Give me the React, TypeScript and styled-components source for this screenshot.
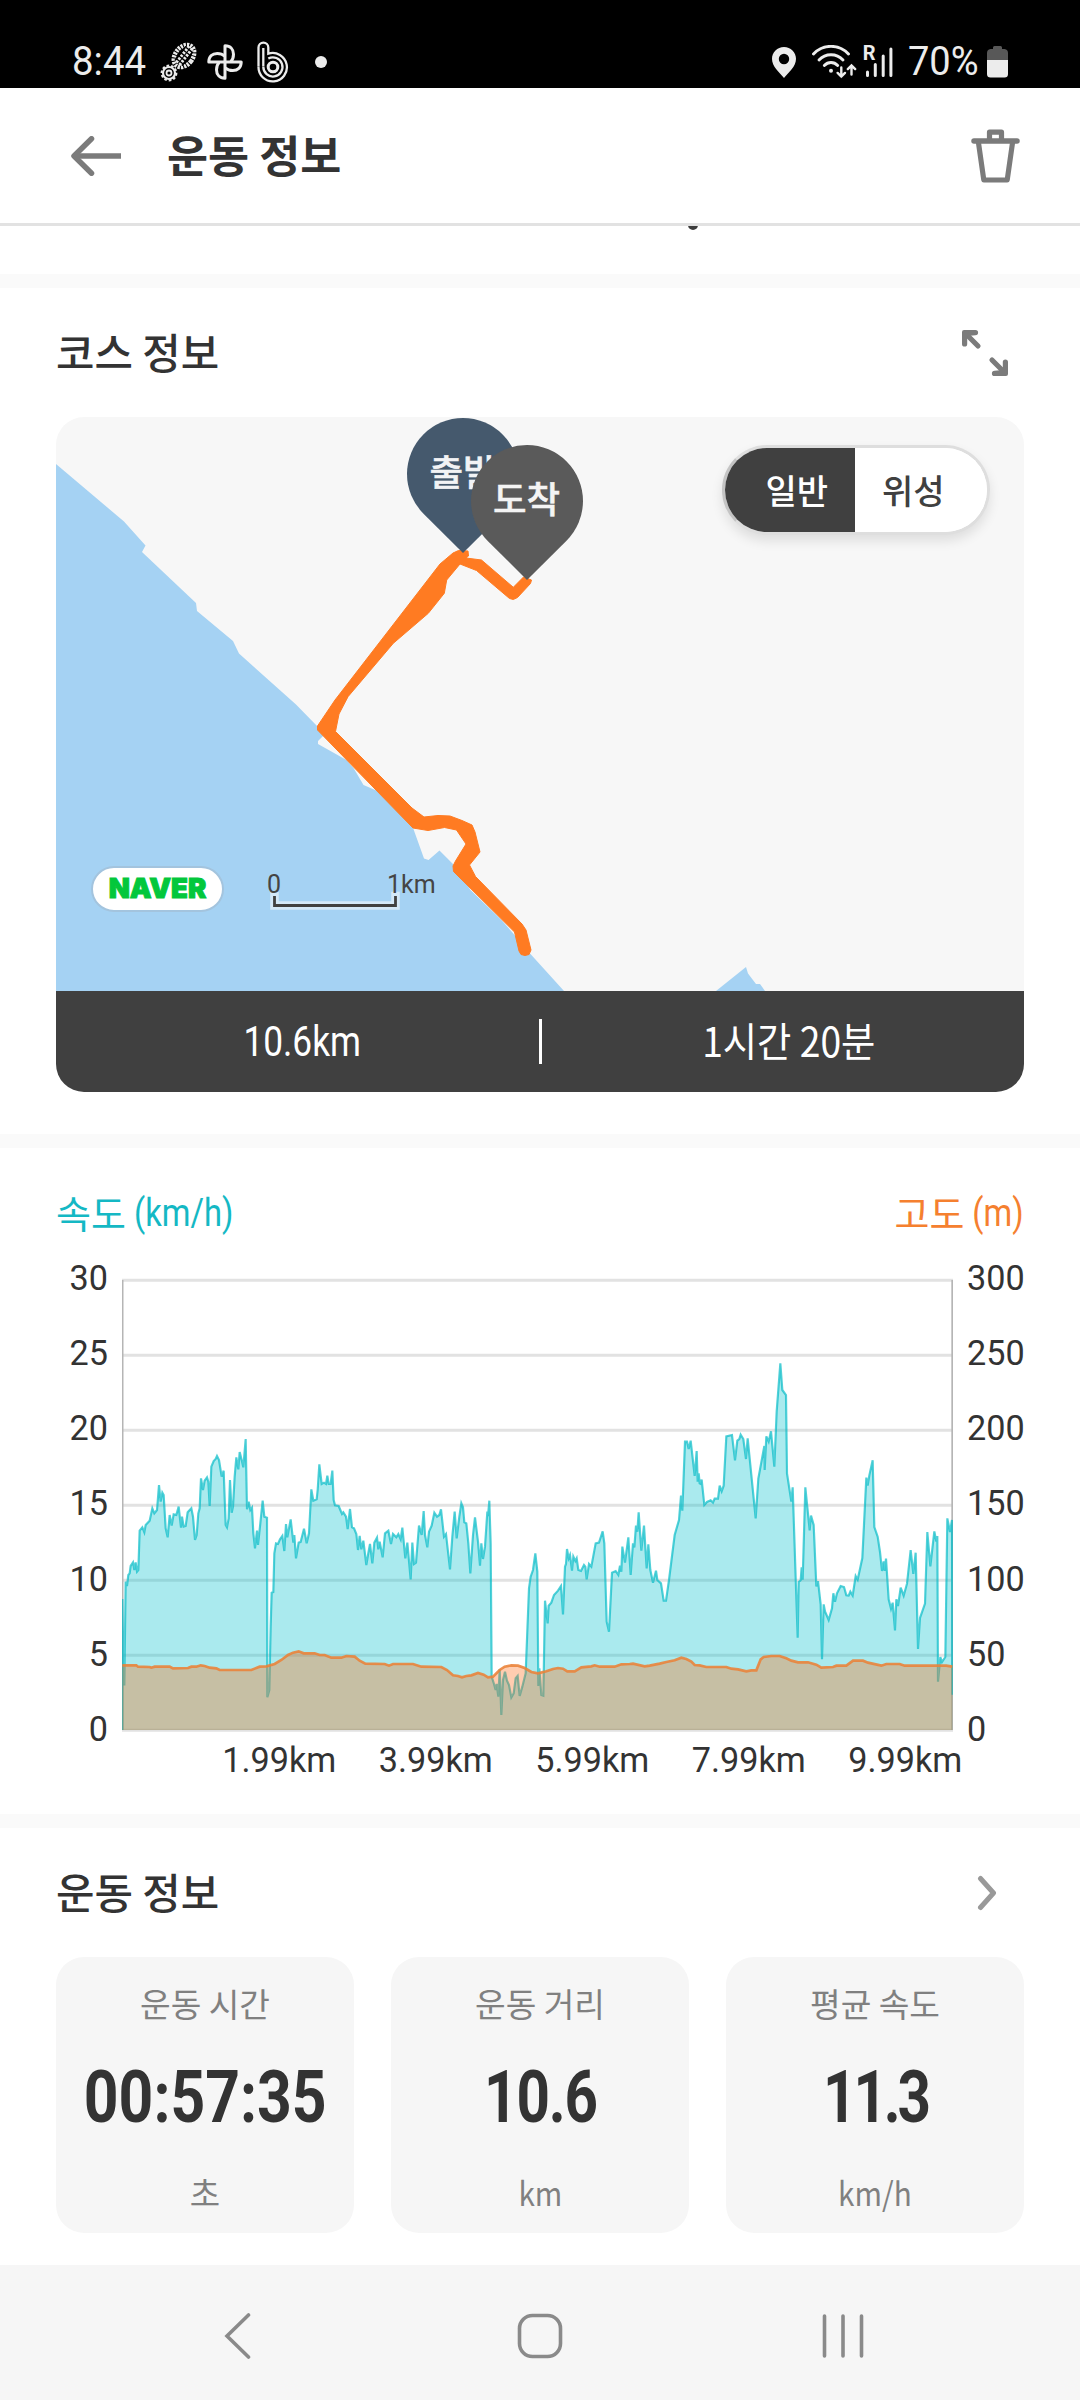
import React from "react";
import styled, { createGlobalStyle } from "styled-components";

const GlobalStyle = createGlobalStyle`
  * { box-sizing: border-box; }
  body { margin: 0; background: #fff; }
`;

const KR = '"Noto Sans CJK KR", sans-serif';
const ROBOTO = 'Roboto, "Noto Sans CJK KR", sans-serif';

const Screen = styled.div`
  width: 1080px;
  height: 2400px;
  display: flex;
  flex-direction: column;
  background: #fff;
  color: #333;
  font-family: ${KR};
  overflow: hidden;
`;

const Text = styled.span<{
  $size: number;
  $weight?: number;
  $color?: string;
  $stretch?: number;
  $origin?: string;
  $font?: string;
  $shift?: number;
  $tracking?: number;
  $outline?: string;
}>`
  display: block;
  white-space: nowrap;
  line-height: 1;
  font-family: ${(p) => p.$font ?? KR};
  font-size: ${(p) => p.$size}px;
  font-weight: ${(p) => p.$weight ?? 400};
  letter-spacing: ${(p) => p.$tracking ?? 0}px;
  color: ${(p) => p.$color ?? "#333"};
  -webkit-text-stroke: ${(p) => p.$outline ?? "0"};
  transform: translateY(${(p) => p.$shift ?? 0}px) scaleX(${(p) => p.$stretch ?? 1});
  transform-origin: ${(p) => p.$origin ?? "center"} center;
`;

/* ---------- status bar ---------- */

const StatusBar = styled.div`
  height: 88px;
  flex: none;
  display: flex;
  justify-content: space-between;
  align-items: flex-start;
  padding: 42px 72px 0 72px;
  background: #000;
`;

const StatusGroup = styled.div`
  display: flex;
  align-items: center;
  height: 40px;
`;

const Gap = styled.i<{ $w: number }>`
  width: ${(p) => p.$w}px;
`;

const FG = "#ececec";

const ShoeIcon = () => (
  <svg width="38" height="40" viewBox="0 0 38 40" fill="none" stroke={FG}>
    <g transform="rotate(38 24 14)">
      <ellipse cx="24" cy="14" rx="8.800" ry="12.300" strokeWidth="4.400" strokeDasharray="2.200 1" />
      <path d="M24 3v22" strokeWidth="7" strokeDasharray="2.300 1.400" />
      <path d="M19.500 5v18M28.500 5v18" stroke="#000" strokeWidth="1.300" />
      <path d="M24 4v20" stroke="#000" strokeWidth="1" />
    </g>
    <circle cx="9" cy="31" r="6" strokeWidth="2.200" />
    <circle cx="9" cy="31" r="7.400" strokeWidth="2" strokeDasharray="2.600 2" />
    <circle cx="9" cy="31" r="2.500" strokeWidth="1.800" />
  </svg>
);

const PinwheelIcon = () => (
  <svg width="36" height="38" viewBox="0 0 36 38" fill="none" stroke={FG} strokeWidth="3" strokeLinejoin="round">
    {[0, 90, 180, 270].map((a) => (
      <path key={a} transform={`rotate(${a} 18 19)`} d="M18 19V2.800c5.500 0 8.500 3.600 8.500 8.400 0 3.300-.9 5.600-2.700 7.600" />
    ))}
  </svg>
);

const BandIcon = () => (
  <svg width="32" height="42" viewBox="0 0 32 42" fill="none" stroke={FG} strokeWidth="2.300">
    <path d="M1.500 25.500V6.500a4.900 4.900 0 0 1 9.800 0v6.200A14.200 14.200 0 1 1 1.500 25.800" />
    <path d="M6.300 25.500V7" />
    <path d="M11.300 17.500a9.600 9.600 0 1 1-5 8.300" />
    <circle cx="16" cy="26" r="4.800" strokeWidth="3" />
  </svg>
);

const DotIcon = () => (
  <svg width="12" height="12" viewBox="0 0 12 12">
    <circle cx="6" cy="6" r="6" fill={FG} />
  </svg>
);

const LocationIcon = () => (
  <svg width="24" height="31" viewBox="0 0 24 31">
    <path
      fill={FG}
      fillRule="evenodd"
      d="M12 0C5.300 0 0 5.200 0 11.800 0 19.500 7 25 12 31c5-6 12-11.500 12-19.200C24 5.200 18.700 0 12 0zm0 6.800a5.200 5.200 0 1 1 0 10.400a5.200 5.200 0 0 1 0-10.400z"
    />
  </svg>
);

const WifiIcon = () => (
  <svg width="45" height="34" viewBox="0 0 45 34" fill="none" stroke={FG} strokeWidth="2.900" strokeLinecap="round">
    <path d="M1.500 9C11-1.200 27-1.200 36.500 9" />
    <path d="M7 15c6.500-7 17.500-7 24 0" />
    <path d="M12.300 20.500c3.800-4 9.600-4 13.400 0" />
    <circle cx="19" cy="25.800" r="2" fill={FG} stroke="none" />
    <path d="M29.300 22.500v9m-3.700-3.600 3.700 3.700 3.700-3.700M39.500 29.500v-9m-3.700 3.600 3.700-3.700 3.700 3.700" strokeWidth="2.400" />
  </svg>
);

const Signal = styled.div`
  position: relative;
  width: 30px;
  height: 32px;
`;

const Roaming = styled.span`
  position: absolute;
  left: 0;
  top: 0;
  font: 700 20px/15px Roboto, sans-serif;
  color: ${FG};
`;

const SignalBars = () => (
  <svg width="30" height="32" viewBox="0 0 30 32" stroke={FG} strokeWidth="3" strokeLinecap="round">
    <path d="M4.500 26v3.500M12.300 18.500v11M20.200 10v19.500M27.900 3v26.500" />
  </svg>
);

const BatteryIcon = () => (
  <svg width="21" height="32" viewBox="0 0 21 32">
    <path d="M6 1.500Q6 0 7.500 0h6Q15 0 15 1.500V3h2.500Q21 3.500 21 7v7H0V7q0-3.500 3.500-4H6z" fill="#585858" />
    <path d="M0 14h21v14q0 3.500-3.500 3.500h-14Q0 31.500 0 28z" fill={FG} />
  </svg>
);

/* ---------- app header ---------- */

const Header = styled.header`
  height: 138px;
  flex: none;
  display: flex;
  align-items: center;
  padding: 0 60px 0 70px;
  border-bottom: 3px solid #e2e2e2;
`;

const HeaderTitle = styled.h1`
  flex: 1;
  margin: 0 0 0 46px;
`;

const BackArrow = () => (
  <svg width="51" height="40" viewBox="0 0 51 40" fill="none" stroke="#7b7b7b" strokeWidth="5.500">
    <path d="M51 20H5" />
    <path d="M21.500 2.800 4 20l17.500 17.200" strokeLinecap="round" strokeLinejoin="round" />
  </svg>
);

const TrashIcon = () => (
  <svg width="49" height="54" viewBox="0 0 49 54" fill="none" stroke="#7b7b7b" strokeWidth="5.200" strokeLinejoin="round">
    <path d="M3 12h43" strokeLinecap="round" strokeWidth="5.500" />
    <path d="M18.500 12V3.200h12V12" />
    <path d="M7.300 12.500 12.800 51h23.400l5.500-38.500" />
  </svg>
);

const ScrolledTail = styled.div`
  height: 48px;
  flex: none;
  overflow: hidden;
  padding-left: 688px;
`;

const TailDot = styled.div`
  width: 10px;
  height: 10px;
  margin-top: -6px;
  border-radius: 50%;
  background: #3c3c3c;
`;

const Band = styled.div`
  height: 14px;
  flex: none;
  background: #fafafa;
`;

/* ---------- course section ---------- */

const Section = styled.section<{ $h: number }>`
  height: ${(p) => p.$h}px;
  flex: none;
  padding: 0 56px;
`;

const SectionHead = styled.div<{ $h: number; $right: number }>`
  height: ${(p) => p.$h}px;
  display: flex;
  align-items: center;
  justify-content: space-between;
  padding-right: ${(p) => p.$right}px;
`;

const ExpandIcon = () => (
  <svg width="46" height="46" viewBox="0 0 46 46" fill="none" stroke="#7b7b7b" strokeWidth="5.200" strokeLinecap="round">
    <path d="M16 16 4 4" />
    <path d="M0 2Q0 0 2 0h11.500a2.600 2.600 0 0 1 0 5.200L5.200 6v8a2.600 2.600 0 0 1-5.200 0z" fill="#7b7b7b" stroke="none" />
    <path d="M30 30l12 12" />
    <path d="M46 44q0 2-2 2H32.500a2.600 2.600 0 0 1 0-5.200l8.300-.8v-8a2.600 2.600 0 0 1 5.200 0z" fill="#7b7b7b" stroke="none" />
  </svg>
);

const CourseCard = styled.div`
  border-radius: 28px;
  overflow: hidden;
`;

const MapCanvas = styled.div`
  position: relative;
  height: 574px;
  background: #f7f7f7;
`;

const MapShapes = styled.svg`
  display: block;
`;

const Pin = styled.div<{ $x: number; $y: number }>`
  position: absolute;
  left: ${(p) => p.$x - 56}px;
  top: ${(p) => p.$y - 135}px;
  width: 112px;
  height: 135px;
  display: grid;
  justify-items: center;

  > * { grid-area: 1 / 1; }
  > span { margin-top: 35px; }
`;

const PinShape = ({ color }: { color: string }) => (
  <svg width="112" height="135" viewBox="0 0 112 135">
    <path d="M56 135 16.500 95.700A56 56 0 1 1 95.500 95.700z" fill={color} />
  </svg>
);

const Toggle = styled.div`
  position: absolute;
  right: 34px;
  top: 28px;
  width: 268px;
  height: 90px;
  display: flex;
  border: 3px solid #dedede;
  border-left-color: #c4c4c4;
  border-radius: 45px;
  overflow: hidden;
  background: #fff;
  box-shadow: 0 6px 12px rgba(0, 0, 0, 0.1);
`;

const ToggleOption = styled.button<{ $on?: boolean }>`
  flex: ${(p) => (p.$on ? "0 0 130px" : "1")};
  display: flex;
  align-items: center;
  justify-content: ${(p) => (p.$on ? "flex-end" : "flex-start")};
  padding: ${(p) => (p.$on ? "0 27px 0 0" : "0 0 0 27px")};
  border: 0;
  background: ${(p) => (p.$on ? "#404040" : "#fff")};
`;

const NaverBadge = styled.div`
  position: absolute;
  left: 35px;
  top: 449px;
  width: 133px;
  height: 46px;
  display: flex;
  align-items: center;
  justify-content: center;
  border: 2px solid #a3c4de;
  border-radius: 23px;
  background: #fff;
`;

const ScaleLabel = styled.div<{ $x: number }>`
  position: absolute;
  left: ${(p) => p.$x}px;
  top: 454.5px;
`;

const CourseBar = styled.div`
  height: 101px;
  display: flex;
  align-items: center;
  background: #404040;

  > span { flex: 1; text-align: center; padding-left: 12px; }
`;

const BarRule = styled.i`
  width: 3px;
  height: 45px;
  background: #fff;
`;

const WATER =
  "56,464 124,521.5 145.5,545.5 142,552 196,603 197,611 233,641 239,653.5 296,704.5 318,727 324,735 318,741 318,744 346.5,760 353.5,768 363.5,785 377.5,791 412,825 424,858.5 428.500,860 439.500,850.5 453,864 470.5,890 501.5,920 514.5,935 526,950 530.5,954 564,991 56,991";

const INLET = "716,991 746,967 748,973.5 756,984 760,984 765,991";

const ROUTE_UPPER =
  "335,700 440,564 453,553 458.5,550.5 468,551 468.5,556 466,558 481.500,560 513.3,587.3 523.5,577 531.5,580 530.5,583.5 517.5,597.5 513.3,599.5 509.5,598.5 476.5,570.5 460,564 446.7,580 444.3,593.3 428.3,613.3 393.3,643.3 348,696.7";

const ROUTE_LOWER =
  "348,696.7 339,714 335.5,731.500 412,808 424,817 438,815.5 450,816 462,820.5 472,825 475,832 480,852 469.5,865 475.5,876.5 522,924 526,930 531,950 529,954.5 525,955.5 521,954.500 519,951 514.5,932 453.5,871.5 453,866 455.5,861 466,844 456.5,830 444.5,827.5 428,830.5 413,828 317.5,730 317.5,726 335,700";

const CourseMap = () => (
  <MapCanvas>
    <MapShapes width="968" height="574" viewBox="56 417 968 574">
      <polygon points={WATER} fill="#a5d2f3" />
      <polygon points={INLET} fill="#a5d2f3" />
      <g fill="#ff7b22" stroke="#ff7b22" strokeWidth="1" strokeLinejoin="round">
        <polygon points={ROUTE_UPPER} />
        <polygon points={ROUTE_LOWER} />
      </g>
      <path d="M274.500 896v9.500h121v-9.500" fill="none" stroke="#d3e8f8" strokeWidth="8.500" strokeLinecap="square" />
      <path d="M274.500 896v9.500h121v-9.500" fill="none" stroke="#404040" strokeWidth="2.800" />
    </MapShapes>
    <Pin $x={407} $y={136}>
      <PinShape color="#45596d" />
      <Text $size={36.5} $weight={500} $color="#f2f3f5" $outline="0.5px #f2f3f5">출발</Text>
    </Pin>
    <Pin $x={470.5} $y={163}>
      <PinShape color="#5a5a5a" />
      <Text $size={36.5} $weight={500} $color="#f4f4f4" $outline="0.5px #f4f4f4">도착</Text>
    </Pin>
    <Toggle>
      <ToggleOption $on>
        <Text $size={34} $weight={500} $color="#fff">일반</Text>
      </ToggleOption>
      <ToggleOption>
        <Text $size={34} $weight={500} $color="#404040">위성</Text>
      </ToggleOption>
    </Toggle>
    <NaverBadge>
      <Text $size={27.5} $weight={900} $color="#03c73c" $font="Inter, sans-serif" $outline="1px #03c73c">NAVER</Text>
    </NaverBadge>
    <ScaleLabel $x={211}>
      <Text $size={25} $font={ROBOTO} $color="#444">0</Text>
    </ScaleLabel>
    <ScaleLabel $x={331}>
      <Text $size={25} $font={ROBOTO} $color="#444">1km</Text>
    </ScaleLabel>
  </MapCanvas>
);

/* ---------- speed / altitude chart ---------- */

const Legend = styled.div`
  height: 130px;
  display: flex;
  align-items: center;
  justify-content: space-between;
`;

const LegendItem = styled.div<{ $gap: number }>`
  display: flex;
  align-items: center;
  gap: ${(p) => p.$gap}px;
`;

const ChartGrid = styled.div`
  display: grid;
  grid-template-columns: 52px 831px 1fr;
  column-gap: 14px;
  align-items: start;
`;

const AxisColumn = styled.div<{ $align: string }>`
  height: 485px;
  margin-top: -17px;
  display: flex;
  flex-direction: column;
  justify-content: space-between;
  align-items: ${(p) => p.$align};
`;

const DistanceRow = styled.div`
  display: grid;
  grid-template-columns: repeat(5, 156.5px);
  justify-items: center;
  margin-left: 145px;
  margin-top: -3px;
`;

/* Samples are in thirds of a pixel, x from the left axis, y from the top of the plot. */
const SPEED =
  "68,1410 68,1017 72,1273 74,1273 78,965 82,978 86,945 90,940 93,918 100,907 104,930 108,907 112,935 116,930 120,812 128,802 134,817 138,795 150,782 158,745 164,760 172,750 178,675 183,725 188,698 192,705 198,805 204,832 210,765 216,797 222,763 230,765 237,740 244,803 247,770 252,800 258,798 264,757 275,745 280,770 286,840 291,825 296,760 300,745 304,655 310,690 315,662 322,652 326,665 330,738 335,620 342,603 348,597 352,588 358,600 366,650 372,632 378,795 382,802 387,775 391,660 396,758 400,740 405,650 410,592 416,628 420,576 426,600 431,622 438,537 442,748 447,725 452,750 457,743 461,820 466,865 472,812 475,855 482,790 489,722 494,770 502,773 503,1312 509,1290 513,1100 516,998 521,996 524,880 529,850 535,852 541,838 548,828 554,873 559,792 563,832 573,778 581,848 584,825 589,895 597,848 603,846 613,806 621,850 628,820 635,688 641,722 651,718 654,690 659,613 666,672 673,668 679,672 683,647 687,672 693,672 698,632 702,720 706,736 717,738 722,750 727,762 731,757 739,770 744,807 751,747 757,802 763,805 770,822 775,870 780,828 785,868 791,842 800,915 805,885 811,852 818,910 824,848 832,833 836,868 840,845 849,892 856,820 866,812 874,852 880,822 890,832 896,822 " +
  "903,838 908,803 917,895 923,848 933,958 938,848 943,912 949,908 958,797 966,825 972,753 976,825 983,862 988,815 996,797 1004,758 1012,770 1019,765 1024,748 1033,830 1039,822 1051,928 1058,830 1065,755 1071,835 1079,770 1085,730 1090,742 1094,787 1100,790 1106,850 1112,940 1120,825 1126,772 1135,845 1141,917 1145,850 1150,897 1156,860 1163,755 1165,768 1169,722 1173,850 1176,1250 1183,1272 1188,1290 1191,1272 1196,1310 1200,1228 1205,1365 1210,1260 1216,1235 1222,1262 1228,1275 1235,1312 1242,1300 1248,1255 1254,1248 1260,1308 1268,1280 1278,1240 1288,985 1293,950 1300,930 1307,880 1313,935 1316,1278 1319,1225 1325,1305 1331,1307 1336,1022 1344,1090 1347,1037 1355,1028 1363,1005 1375,992 1384,978 1390,1063 1396,920 1399,912 1402,867 1407,895 1411,885 1417,932 1421,890 1427,903 1431,895 1436,930 1444,933 1453,915 1457,920 1461,958 1468,912 1475,920 1488,850 1498,848 1509,814 1514,850 1521,1085 1528,1115 1537,938 1548,933 1556,945 1561,917 1565,935 1568,860 1576,908 1586,832 1593,945 1600,850 1604,862 1609,797 1613,815 1617,757 1625,872 1633,797 1641,925 1646,853 1652,930 1660,968 1669,932 1673,960 1684,970 1692,1022 1699,1022 1708,960 1725,825 1738,780 1744,707 1748,752 1756,545 1762,545 1767,567 1773,542 1785,648 1791,573 1794,665 1797,640 1800,670 " +
  "1802,671 1806,659 1814,735 1822,726 1833,721 1840,728 1845,716 1855,716 1860,677 1866,694 1872,677 1880,529 1897,525 1906,601 1913,542 1919,537 1923,524 1931,537 1939,597 1944,535 1968,775 1976,656 1994,558 1995,630 2000,529 2007,545 2014,514 2024,620 2031,455 2042,310 2048,390 2059,405 2062,640 2075,725 2079,682 2094,1133 2097,966 2103,961 2106,922 2109,959 2117,682 2130,811 2134,767 2142,795 2150,979 2155,963 2163,1033 2167,1198 2172,1033 2176,1054 2187,1080 2197,1045 2201,1000 2206,1025 2212,1000 2223,978 2233,981 2240,1006 2247,1007 2252,995 2259,1007 2268,948 2274,959 2288,894 2300,653 2304,677 2309,646 2319,601 2324,801 2334,830 2341,876 2347,933 2352,904 2355,933 2359,896 2367,1018 2374,1046 2379,1028 2386,1111 2390,1018 2395,1038 2403,983 2412,1007 2422,971 2433,870 2441,942 2448,878 2455,1167 2461,1074 2476,1031 2483,816 2492,919 2504,814 2510,845 2513,828 2515,1265 2522,1191 2527,1206 2537,1191 2543,775 2551,816 2557,780 2558,1304";

const ALTITUDE =
  "68,1216 110,1216 115,1220 150,1221 155,1223 165,1220 210,1220 220,1225 265,1224 275,1220 290,1220 303,1216 315,1218 330,1223 350,1225 360,1230 455,1230 480,1220 500,1219 525,1212 545,1200 565,1185 580,1178 597,1174 612,1180 645,1180 660,1185 675,1185 695,1193 725,1193 740,1188 765,1190 780,1202 797,1211 855,1212 868,1217 880,1212 940,1212 965,1220 1025,1221 1042,1230 1060,1246 1075,1248 1087,1252 1100,1248 1115,1246 1135,1239 1152,1244 1165,1252 1180,1250 1200,1230 1215,1220 1235,1216 1255,1217 1275,1224 1295,1236 1315,1240 1340,1234 1360,1227 1375,1224 1390,1226 1403,1234 1425,1234 1445,1222 1475,1219 1485,1216 1500,1220 1545,1220 1565,1213 1590,1212 1600,1211 1635,1219 1650,1217 1680,1211 1700,1206 1725,1201 1745,1193 1760,1197 1775,1205 1785,1215 1800,1216 1820,1221 1880,1221 1895,1226 1915,1228 1940,1234 1955,1231 1970,1231 1983,1198 1992,1191 2015,1188 2040,1188 2060,1195 2075,1202 2095,1207 2125,1207 2150,1214 2165,1223 2200,1221 2210,1217 2240,1217 2260,1202 2290,1202 2305,1208 2345,1217 2360,1212 2400,1212 2415,1217 2540,1217 2558,1220";

const GRID_LINES = [0, 1, 2, 3, 4, 5, 6].map((i) => 60 + i * 225);

const PlotArea = styled.svg`
  display: block;
`;

const Plot = () => (
  <PlotArea width="831" height="454" viewBox="67 54 2493 1362">
    {GRID_LINES.map((y) => (
      <path key={y} d={`M66 ${y + 1}H2560`} stroke="#e2e2e2" strokeWidth="9" />
    ))}
    <path d="M69 60V1410M2557.500 60V1410" stroke="#b5b5b5" strokeWidth="5" />
    <polygon points={`${SPEED} 2558,1410`} fill="#00c0cc" fillOpacity=".333" />
    <polyline points={SPEED} fill="none" stroke="#00b9c6" strokeOpacity=".68" strokeWidth="6.500" />
    <polygon points={`68,1410 ${ALTITUDE} 2558,1410`} fill="#ff6a12" fillOpacity=".333" />
    <polyline points={ALTITUDE} fill="none" stroke="#ea8238" strokeOpacity=".88" strokeWidth="8" />
  </PlotArea>
);

const AxisLabel = ({ children }: { children: React.ReactNode }) => (
  <Text $size={34.2} $font={ROBOTO}>{children}</Text>
);

/* ---------- workout summary ---------- */

const ChevronRight = () => (
  <svg width="20" height="36" viewBox="0 0 20 36" fill="none" stroke="#999" strokeWidth="5" strokeLinecap="round" strokeLinejoin="round">
    <path d="M3.500 3.500 16.500 18 3.500 32.500" />
  </svg>
);

const Cards = styled.div`
  display: grid;
  grid-template-columns: repeat(3, 1fr);
  column-gap: 37px;
`;

const StatCard = styled.article`
  height: 276px;
  display: grid;
  grid-template-rows: 91px 98px 87px;
  place-items: center;
  border-radius: 28px;
  background: #f6f6f6;
`;

const NavBar = styled.nav`
  height: 135px;
  flex: none;
  display: flex;
  align-items: center;
  justify-content: space-between;
  padding: 7px 216px 0 224px;
  background: #f6f6f6;
`;

const HomeIcon = styled.svg`
  margin-left: 6px;
`;

const navStroke = { fill: "none", stroke: "#8a8a8a", strokeWidth: 3.6, strokeLinecap: "round" as const };

const stats = [
  { label: "운동 시간", value: "00:57:35", unit: "초", stretch: 0.83, tracking: 0 },
  { label: "운동 거리", value: "10.6", unit: "km", stretch: 0.8, tracking: -1.5 },
  { label: "평균 속도", value: "11.3", unit: "km/h", stretch: 0.8, tracking: -4 },
];

export default function App() {
  return (
    <Screen>
      <GlobalStyle />
      <StatusBar>
        <StatusGroup>
          <Text $size={40} $font={ROBOTO} $color={FG} $stretch={0.96} $origin="left">8:44</Text>
          <Gap $w={11} />
          <ShoeIcon />
          <Gap $w={9} />
          <PinwheelIcon />
          <Gap $w={14} />
          <BandIcon />
          <Gap $w={26} />
          <DotIcon />
        </StatusGroup>
        <StatusGroup>
          <LocationIcon />
          <Gap $w={16} />
          <WifiIcon />
          <Gap $w={6} />
          <Signal>
            <Roaming>R</Roaming>
            <SignalBars />
          </Signal>
          <Gap $w={15} />
          <Text $size={40} $font={ROBOTO} $color={FG} $stretch={0.95} $origin="left">70%</Text>
          <Gap $w={5} />
          <BatteryIcon />
        </StatusGroup>
      </StatusBar>

      <Header>
        <BackArrow />
        <HeaderTitle>
          <Text $size={44.6} $weight={700} $shift={-1.5}>운동 정보</Text>
        </HeaderTitle>
        <TrashIcon />
      </Header>

      <ScrolledTail>
        <TailDot />
      </ScrolledTail>
      <Band />

      <Section $h={846}>
        <SectionHead $h={129} $right={16}>
          <Text $size={41.8} $weight={500} $shift={-1.5}>코스 정보</Text>
          <ExpandIcon />
        </SectionHead>
        <CourseCard>
          <CourseMap />
          <CourseBar>
            <Text $size={43} $color="#fff" $font={ROBOTO} $stretch={0.82}>10.6km</Text>
            <BarRule />
            <Text $size={40.5} $color="#fff" $stretch={0.92} $shift={-1}>1시간 20분</Text>
          </CourseBar>
        </CourseCard>
      </Section>
      <Band />

      <Section $h={666}>
        <Legend>
          <LegendItem $gap={8}>
            <Text $size={38} $color="#14b8c4" $shift={-1}>속도</Text>
            <Text $size={38} $color="#14b8c4" $font={ROBOTO} $stretch={0.86} $origin="left">(km/h)</Text>
          </LegendItem>
          <LegendItem $gap={0}>
            <Text $size={38} $color="#f5802f" $shift={-1}>고도</Text>
            <Text $size={38} $color="#f5802f" $font={ROBOTO} $stretch={0.86} $origin="right">(m)</Text>
          </LegendItem>
        </Legend>
        <ChartGrid>
          <AxisColumn $align="flex-end">
            {[30, 25, 20, 15, 10, 5, 0].map((v) => (
              <AxisLabel key={v}>{v}</AxisLabel>
            ))}
          </AxisColumn>
          <Plot />
          <AxisColumn $align="flex-start">
            {[300, 250, 200, 150, 100, 50, 0].map((v) => (
              <AxisLabel key={v}>{v}</AxisLabel>
            ))}
          </AxisColumn>
        </ChartGrid>
        <DistanceRow>
          {["1.99km", "3.99km", "5.99km", "7.99km", "9.99km"].map((v) => (
            <AxisLabel key={v}>{v}</AxisLabel>
          ))}
        </DistanceRow>
      </Section>
      <Band />

      <Section $h={437}>
        <SectionHead $h={129} $right={27}>
          <Text $size={41.8} $weight={500} $shift={-1.5}>운동 정보</Text>
          <ChevronRight />
        </SectionHead>
        <Cards>
          {stats.map((s) => (
            <StatCard key={s.label}>
              <Text $size={33.3} $color="#808080">{s.label}</Text>
              <Text $size={73} $weight={700} $font={ROBOTO} $stretch={s.stretch} $tracking={s.tracking}>{s.value}</Text>
              <Text $size={33} $color="#808080" $stretch={s.unit === "초" ? 1 : 0.9} $shift={3}>{s.unit}</Text>
            </StatCard>
          ))}
        </Cards>
      </Section>

      <NavBar>
        <svg width="27" height="48" viewBox="0 0 27 48" {...navStroke}>
          <path d="M24.500 3 3 24l21.500 21" />
        </svg>
        <HomeIcon width="46" height="46" viewBox="0 0 46 46" {...navStroke}>
          <rect x="2.500" y="2.500" width="41" height="41" rx="13" />
        </HomeIcon>
        <svg width="42" height="44" viewBox="0 0 42 44" {...navStroke}>
          <path d="M2.500 2v40M21 2v40M39.500 2v40" />
        </svg>
      </NavBar>
    </Screen>
  );
}
